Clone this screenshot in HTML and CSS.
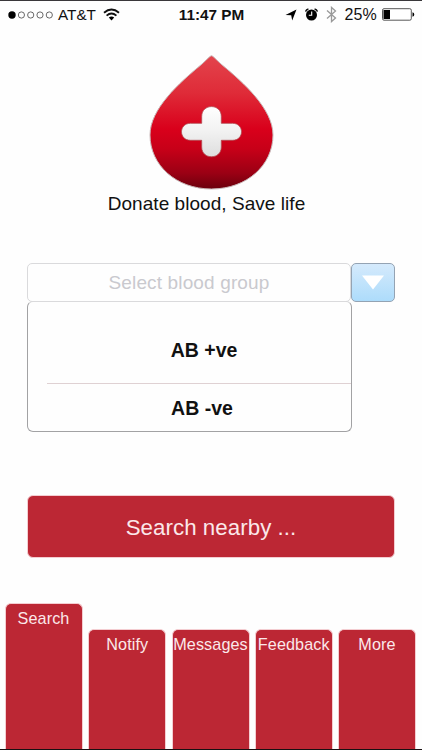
FILE: index.html
```html
<!DOCTYPE html>
<html lang="en">
<head>
<meta charset="utf-8">
<title>Donate blood</title>
<link rel="stylesheet" href="styles.css">
</head>
<body>
<main class="screen">
  <header class="status">
    <div class="carrier">
      <svg class="signal" width="46" height="10" viewBox="0 0 46 10"><circle cx="4" cy="5" r="3.7"/><g fill="none" stroke="#444" stroke-width=".8"><circle cx="13.4" cy="5" r="3.1"/><circle cx="22.7" cy="5" r="3.1"/><circle cx="32" cy="5" r="3.1"/><circle cx="41.3" cy="5" r="3.1"/></g></svg>
      <span class="network">AT&amp;T</span>
      <svg class="wifi" width="17" height="13" viewBox="0 0 17 13"><g fill="none" stroke="#111" stroke-width="1.9"><path d="M1 4.7Q8.5-1.5 16 4.7"/><path d="M3.6 7.6Q8.5 3.3 13.4 7.6"/></g><path d="M5.8 9.6Q8.5 7.4 11.2 9.6L8.5 12.4Z"/></svg>
    </div>
    <div class="time">11:47 PM</div>
    <div class="indicators">
      <svg width="12" height="12" viewBox="0 0 12 12"><path d="M11.5.5L7.2 11.5 6.2 6.2 .5 6Z"/></svg>
      <svg class="alarm" width="13" height="13" viewBox="0 0 13 13"><circle cx="6.5" cy="7" r="5.5"/><path d="M.6 3.6Q1 1.5 3.4 1M12.4 3.6Q12 1.5 9.6 1" fill="none" stroke="#111" stroke-width="1.5"/><path d="M6.7 3.5V7.2H3.8" fill="none" stroke="#fff" stroke-width="1.1"/></svg>
      <svg class="bluetooth" width="11" height="17" viewBox="0 0 11 17"><path d="M1 4.5L9.5 12 5.5 15.6V1.4L9.5 5 1 12.5" fill="none" stroke="#999" stroke-width="1.3"/></svg>
      <span class="percent">25%</span>
      <svg class="battery" width="33" height="13" viewBox="0 0 33 13"><rect x=".5" y=".7" width="28.8" height="11.5" rx="1.5" fill="#fff" stroke="#444" stroke-width=".9"/><path d="M1.5 2H8V11H1.5ZM30.5 4.3Q32.3 4.8 32.3 6.5T30.5 8.7Z"/></svg>
    </div>
  </header>

  <section class="brand">
    <svg class="drop" width="125" height="136" viewBox="0 0 125 136">
      <defs>
        <linearGradient id="blood" x1="0" y1="0" x2="0" y2="1"><stop offset="0" stop-color="#e3444c"/><stop offset=".28" stop-color="#df2b38"/><stop offset=".55" stop-color="#d9001b"/><stop offset=".7" stop-color="#c70018"/><stop offset=".88" stop-color="#9b0014"/><stop offset="1" stop-color="#6b000d"/></linearGradient>
        <linearGradient id="cross" x1="0" y1="0" x2="0" y2="1"><stop offset="0" stop-color="#fff"/><stop offset=".45" stop-color="#f3f3f3"/><stop offset="1" stop-color="#dedede"/></linearGradient>
      </defs>
      <path d="M62.5 .8C64 .8 67 4.5 72 9C95 28 124 54 124 80C124 110 98 134 62.5 134C27 134 1 110 1 80C1 54 30 28 53 9C58 4.5 61 .8 62.5 .8Z" fill="url(#blood)" stroke="#c9b7b8" stroke-width="1"/>
      <path d="M52.7 61.5C52.7 48.3 72.3 48.3 72.3 61.5V68.3H83.5C95.5 68.3 95.5 85.3 83.5 85.3H72.3V92C72.3 105 52.7 105 52.7 92V85.3H41.5C29.5 85.3 29.5 68.3 41.5 68.3H52.7Z" fill="url(#cross)" stroke="#b34a50" stroke-width=".8"/>
    </svg>
    <h1 class="tagline">Donate blood, Save life</h1>
  </section>

  <section class="picker">
    <div class="field">
      <div class="placeholder">Select blood group</div>
      <button class="toggle" aria-label="Open"><svg width="22" height="15" viewBox="0 0 22 15"><path d="M0 .5H22L11 14.5Z" fill="#fff"/></svg></button>
    </div>
    <ul class="options">
      <li class="option first">AB +ve</li>
      <li class="option">AB -ve</li>
    </ul>
  </section>

  <button class="search">Search nearby ...</button>

  <nav class="tabs">
    <a class="tab active">Search</a>
    <a class="tab">Notify</a>
    <a class="tab">Messages</a>
    <a class="tab">Feedback</a>
    <a class="tab">More</a>
  </nav>
</main>
</body>
</html>
```
FILE: styles.css
```css
* { box-sizing: border-box; }
body {
  margin: 0;
  background: #fefefe;
  font-family: "Liberation Sans", Arial, sans-serif;
  color: #111;
}
button { font: inherit; padding: 0; }
svg { display: block; flex: none; }
.screen {
  width: 422px;
  height: 750px;
  display: flex;
  flex-direction: column;
  overflow: hidden;
  border-top: 1px solid #39373a;
  border-bottom: 1px solid #181012;
}
.status {
  height: 27px;
  flex: none;
  display: grid;
  grid-template-columns: 1fr 68px 1fr;
  align-items: center;
  padding: 0 7px 0 8px;
  white-space: nowrap;
}
.carrier, .indicators { display: flex; align-items: center; }
.network { margin-left: 4px; font-size: 15.3px; }
.wifi { margin-left: 7px; }
.time { font-size: 15.3px; font-weight: bold; text-align: center; }
.indicators { justify-content: flex-end; }
.alarm { margin-left: 8px; }
.bluetooth { margin-left: 8px; }
.percent { margin-left: 7px; font-size: 16px; letter-spacing: .2px; }
.battery { margin-left: 5px; }
.brand {
  height: 191px;
  flex: none;
  display: flex;
  flex-direction: column;
  align-items: center;
  padding-top: 27px;
}
.tagline {
  margin: 2px 0 0;
  padding-right: 9px;
  font-size: 19px;
  font-weight: normal;
  line-height: 22px;
  letter-spacing: .05px;
}
.picker { margin: 44px 27px 0; flex: none; }
.field { display: flex; height: 39px; }
.placeholder {
  width: 324px;
  flex: none;
  border: 1px solid #dadadc;
  border-radius: 5px;
  text-align: center;
  font-size: 19px;
  line-height: 37px;
  letter-spacing: .14px;
  color: #c9c9ce;
}
.toggle {
  width: 44px;
  flex: none;
  display: flex;
  justify-content: center;
  padding-top: 11px;
  border: 1px solid #94a3b3;
  border-radius: 5px;
  background: linear-gradient(#d5eafc, #addcfb);
}
.options {
  width: 325px;
  height: 131px;
  margin: -1px 0 0;
  padding: 0 0 0 19px;
  list-style: none;
  border: 1px solid #a2a2a4;
  border-top-color: #d4d4d6;
  border-radius: 6px;
}
.option {
  height: 47px;
  padding-left: 6px;
  line-height: 49px;
  text-align: center;
  font-size: 19.5px;
  font-weight: bold;
}
.first {
  height: 82px;
  padding-top: 24px;
  padding-left: 10px;
  border-bottom: 1px solid #dfd1d3;
}
.search {
  flex: none;
  height: 63px;
  margin: 63px 27px 0;
  padding-top: 2px;
  border: 1px solid #f4cdd1;
  border-radius: 6px;
  background: #bc2734;
  color: #fbe8ea;
  font-size: 22.3px;
  letter-spacing: .05px;
}
.tabs {
  flex: 1;
  margin: 45px 6px 0 5px;
  display: grid;
  grid-template-columns: repeat(5, 78px);
  justify-content: space-between;
}
.tab {
  margin-top: 26px;
  padding-top: 4px;
  border: 1px solid #f4cdd1;
  border-bottom: 0;
  border-radius: 6px 6px 0 0;
  background: #bc2734;
  color: #fbe8ea;
  font-size: 16.2px;
  letter-spacing: .1px;
  line-height: 20px;
  text-align: center;
}
.active { padding-right: 1px; margin-top: 0; }
```
